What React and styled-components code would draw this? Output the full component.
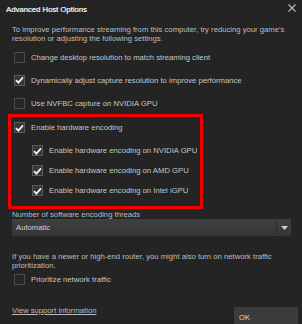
import styled, { createGlobalStyle } from 'styled-components'

const Global = createGlobalStyle`
  html, body {
    margin: 0;
    background: #242424;
  }
  body {
    font-family: "Liberation Sans", Arial, sans-serif;
  }
`

function Check({ checked }) {
  return (
    <Box checked={checked}>
      {checked && (
        <svg width="9" height="8" viewBox="0 0 9 8">
          <path d="M1 4.2 L3.4 6.6 L8 1.4" fill="none" stroke="#f2f2f2" strokeWidth="1.8" />
        </svg>
      )}
    </Box>
  )
}

function Option({ checked, indent, children }) {
  return (
    <OptionRow indent={indent}>
      <Check checked={checked} />
      <span>{children}</span>
    </OptionRow>
  )
}

export default function App() {
  return (
    <Dialog>
      <Global />
      <TitleBar>
        <Title>Advanced Host Options</Title>
        <Close>
          <svg width="8" height="8" viewBox="0 0 8 8">
            <path d="M0.5 0.5 L7.5 7.5 M7.5 0.5 L0.5 7.5" stroke="#bcbcbc" strokeWidth="1.1" />
          </svg>
        </Close>
      </TitleBar>
      <Body>
        <Para>
          To improve performance streaming from this computer, try reducing your game's resolution or
          adjusting the following settings.
        </Para>
        <Options>
          <Option>Change desktop resolution to match streaming client</Option>
          <Option checked>Dynamically adjust capture resolution to improve performance</Option>
          <Option>Use NVFBC capture on NVIDIA GPU</Option>
        </Options>
        <Highlight>
          <Option checked>Enable hardware encoding</Option>
          <SubList>
            <Option checked indent>Enable hardware encoding on NVIDIA GPU</Option>
            <Option checked indent>Enable hardware encoding on AMD GPU</Option>
            <Option checked indent>Enable hardware encoding on Intel iGPU</Option>
          </SubList>
        </Highlight>
        <FieldLabel>Number of software encoding threads</FieldLabel>
        <Select>
          <span>Automatic</span>
          <Arrow>
            <svg width="7" height="4" viewBox="0 0 7 4">
              <path d="M0 0 H7 L3.5 4 Z" fill="#cfcfcf" />
            </svg>
          </Arrow>
        </Select>
        <Para2>
          If you have a newer or high-end router, you might also turn on network traffic prioritization.
        </Para2>
        <Option>Prioritize network traffic</Option>
        <Footer>
          <Link>View support information</Link>
          <OkButton>OK</OkButton>
        </Footer>
      </Body>
    </Dialog>
  )
}

const Dialog = styled.div`
  width: 302px;
  height: 324px;
  overflow: hidden;
  background: #242424;
  color: #c3c3c3;
  font-size: 7.7px;
`

const TitleBar = styled.div`
  display: flex;
  justify-content: space-between;
  align-items: center;
  height: 16px;
  padding: 0 6px;
  margin-top: 1px;
`

const Title = styled.div`
  font-size: 7.7px;
  color: #e2e2e2;
  text-shadow: 0.3px 0 0 #e2e2e2;
`

const Close = styled.div`
  display: flex;
  margin-top: -2px;
`

const Body = styled.div`
  padding: 8px 4px 0 12px;
`

const Para = styled.p`
  margin: 0;
  line-height: 9px;
  color: #bdbdbd;
  padding-right: 8px;
`

const Options = styled.div`
  display: flex;
  flex-direction: column;
  gap: 12px;
  margin-top: 8.5px;
`

const OptionRow = styled.div`
  display: flex;
  align-items: center;
  gap: 6px;
  height: 11px;
  padding-left: ${(p) => (p.indent ? '20px' : '2px')};
  white-space: nowrap;
  color: #c6c6c6;
`

const Box = styled.div`
  width: 9px;
  height: 9px;
  flex: none;
  border: 1px solid ${(p) => (p.checked ? '#5a5a5a' : '#4a4a4a')};
  background: ${(p) => (p.checked ? '#363636' : '#262626')};
  display: flex;
  align-items: center;
  justify-content: center;
`

const Highlight = styled.div`
  box-sizing: border-box;
  margin: 5px 0 0 -4px;
  width: 195px;
  height: 95px;
  border: 3px solid #f20000;
  padding: 5.5px 0 0 1px;
`

const SubList = styled.div`
  display: flex;
  flex-direction: column;
  gap: 9px;
  margin-top: 12px;
`

const FieldLabel = styled.div`
  margin-top: 1.5px;
  line-height: 9px;
  color: #bdbdbd;
`

const Select = styled.div`
  box-sizing: border-box;
  display: flex;
  align-items: center;
  justify-content: space-between;
  width: 279px;
  height: 17px;
  padding-left: 4px;
  background: linear-gradient(#404040, #353535);
  color: #d2d2d2;
`

const Arrow = styled.div`
  display: flex;
  align-items: center;
  justify-content: center;
  width: 14px;
  height: 13px;
  border-left: 1px solid #2c2c2c;
`

const Para2 = styled.p`
  margin: 16px 0 4px;
  line-height: 9px;
  color: #bdbdbd;
  padding-right: 10px;
`

const Footer = styled.div`
  display: flex;
  justify-content: space-between;
  align-items: flex-start;
  margin-top: 22px;
`

const Link = styled.a`
  color: #bcbcbc;
  text-decoration: underline;
  line-height: 8px;
`

const OkButton = styled.button`
  width: 64px;
  height: 20px;
  background: #3b3b3b;
  border: none;
  color: #d8d8d8;
  font-family: inherit;
  font-size: 7.7px;
  text-align: left;
  padding: 0 0 0 5px;
`
